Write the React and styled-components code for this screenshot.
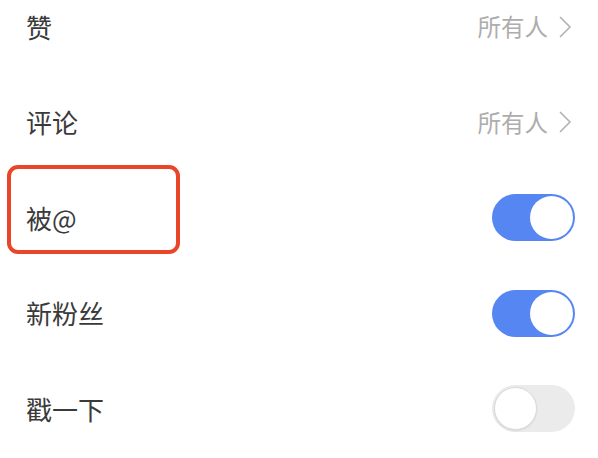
import React from "react";
import styled, { createGlobalStyle } from "styled-components";

const Global = createGlobalStyle`
  html, body { margin: 0; padding: 0; background: #fff; }
  body { font-family: "Noto Sans CJK SC", "Noto Sans", sans-serif; overflow: hidden; }
`;

const Page = styled.div`
  width: 598px;
  height: 458px;
  overflow: hidden;
  background: #fff;
`;

const List = styled.div`
  display: flex;
  flex-direction: column;
  margin-top: -21px;
`;

const Row = styled.div`
  position: relative;
  height: 95.5px;
  display: flex;
  align-items: center;
  justify-content: space-between;
  padding: 0 23px 0 26px;
  box-sizing: border-box;
`;

const Label = styled.span`
  font-size: 26px;
  font-weight: 400;
  color: #3a3a3a;
  line-height: 1;
`;

const Value = styled.span`
  display: flex;
  align-items: center;
  gap: 11px;
  font-size: 23.5px;
  font-weight: 400;
  color: #adadad;
  line-height: 1;
  margin-right: 3px;
`;

const Track = styled.div`
  width: 83px;
  height: 47px;
  border-radius: 24px;
  box-sizing: border-box;
  background: ${(p) => (p.$on ? "#5686f1" : "#ebebeb")};
  display: flex;
  align-items: center;
  justify-content: ${(p) => (p.$on ? "flex-end" : "flex-start")};
  padding: 2px;
`;

const Knob = styled.div`
  width: 43px;
  height: 43px;
  border-radius: 50%;
  background: #fff;
  box-sizing: border-box;
  border: ${(p) => (p.$on ? "none" : "1px solid #d9d9d9")};
  box-shadow: ${(p) => (p.$on ? "none" : "0 1px 2px rgba(0,0,0,0.08)")};
`;

const Highlight = styled.div`
  position: absolute;
  left: 7px;
  top: -5px;
  width: 173px;
  height: 89px;
  border: 4.5px solid #ea4429;
  border-radius: 11px;
  box-sizing: border-box;
  pointer-events: none;
`;

const Chevron = () => (
  <svg width="13" height="22" viewBox="0 0 13 22" fill="none">
    <path d="M1.5 1.5 L11 11 L1.5 20.5" stroke="#b3b3b3" strokeWidth="1.7" strokeLinecap="round" strokeLinejoin="round" />
  </svg>
);

const Toggle = ({ on }) => (
  <Track $on={on}>
    <Knob $on={on} />
  </Track>
);

export default function App() {
  return (
    <Page>
      <Global />
      <List>
        <Row>
          <Label>赞</Label>
          <Value>所有人<Chevron /></Value>
        </Row>
        <Row>
          <Label>评论</Label>
          <Value>所有人<Chevron /></Value>
        </Row>
        <Row>
          <Highlight />
          <Label>被@</Label>
          <Toggle on />
        </Row>
        <Row>
          <Label>新粉丝</Label>
          <Toggle on />
        </Row>
        <Row>
          <Label>戳一下</Label>
          <Toggle on={false} />
        </Row>
      </List>
    </Page>
  );
}
